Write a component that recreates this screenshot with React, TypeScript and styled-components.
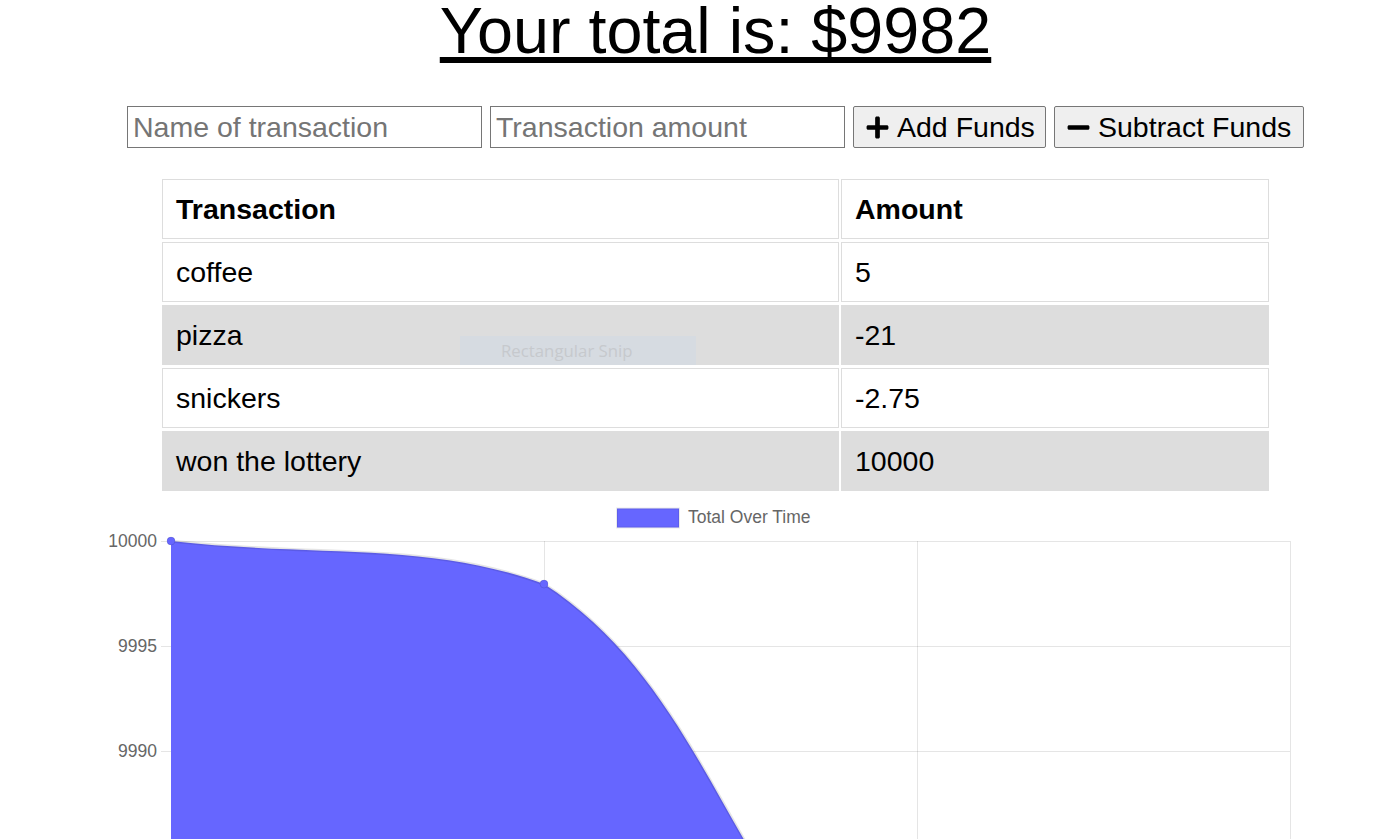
import React from "react";
import styled, { createGlobalStyle } from "styled-components";
import { FaPlus, FaMinus } from "react-icons/fa";

const GlobalStyle = createGlobalStyle`
  html, body { margin: 0; padding: 0; background: #fff; overflow: hidden; }
  body { font-family: "Liberation Sans", Arial, sans-serif; color: #000; }
`;

const Page = styled.div`
  position: relative;
  width: 1391px;
  height: 839px;
  padding-left: 40px;
  box-sizing: border-box;
  overflow: hidden;
`;

const Title = styled.h1`
  margin: 0;
  font-size: 64.7px;
  line-height: 62px;
  font-weight: normal;
  text-align: center;
  text-decoration: underline;
`;

const Form = styled.div`
  display: flex;
  justify-content: center;
  gap: 8px;
  margin-top: 44px;
`;

const Field = styled.input`
  box-sizing: border-box;
  width: 355px;
  height: 42px;
  padding: 0 5px;
  border: 1px solid #767676;
  border-radius: 0;
  font-family: "Liberation Sans", Arial, sans-serif;
  font-size: 28.5px;
  color: #000;
  &::placeholder { color: #757575; }
`;

const Button = styled.button<{ $w: number }>`
  box-sizing: border-box;
  display: flex;
  align-items: center;
  gap: 7px;
  width: ${(p) => p.$w}px;
  height: 42px;
  padding: 0 11px;
  background: #efefef;
  border: 1px solid #767676;
  border-radius: 2px;
  font-family: "Liberation Sans", Arial, sans-serif;
  font-size: 28.5px;
  color: #000;
  white-space: nowrap;
  svg { flex: none; }
`;

const Table = styled.table`
  width: 1111px;
  margin: 28px auto 0;
  border-collapse: separate;
  border-spacing: 2px 3px;
  font-size: 28.5px;
`;

const Row = styled.tr<{ $striped?: boolean }>`
  background: ${(p) => (p.$striped ? "#dddddd" : "transparent")};
`;

const Cell = styled.td<{ $first?: boolean }>`
  box-sizing: border-box;
  height: 60px;
  width: ${(p) => (p.$first ? "677px" : "auto")};
  padding: 0 13px;
  border: 1px solid #dddddd;
  text-align: left;
  vertical-align: middle;
`;

const HeadCell = styled(Cell).attrs({ as: "th" })`
  font-weight: bold;
`;

const ChartBox = styled.div`
  margin-left: -40px;
  svg { display: block; }
`;

const Snip = styled.div`
  position: absolute;
  left: 460px;
  top: 336px;
  width: 236px;
  height: 29px;
  box-sizing: border-box;
  padding-left: 41px;
  display: flex;
  align-items: center;
  background: rgba(208, 216, 228, 0.55);
  color: #c6c9cd;
  font-family: "Open Sans", "Noto Sans", sans-serif;
  font-size: 16.8px;
`;

const rows = [
  { name: "coffee", amount: "5" },
  { name: "pizza", amount: "-21" },
  { name: "snickers", amount: "-2.75" },
  { name: "won the lottery", amount: "10000" },
];

const curve =
  "M171,541 C320.2,557.8 426.4,541 544,584 C724.8,700.1 738.4,943.6 917,1024";

function Chart() {
  const gridY = [541, 646, 751];
  const gridX = [544, 917, 1290];
  const grid = "rgba(0,0,0,0.1)";
  return (
    <ChartBox>
      <svg width={1391} height={345} viewBox="0 494 1391 345">
        <rect x={617} y={508.5} width={62} height={19} fill="#6666ff" stroke="rgba(0,0,0,0.08)" strokeWidth={2} />
        <text x={688} y={523} fontSize={17.5} fill="#666" fontFamily="Liberation Sans, Arial, sans-serif">
          Total Over Time
        </text>
        {gridY.map((y) => (
          <line key={y} x1={161} x2={1290} y1={y + 0.5} y2={y + 0.5} stroke={grid} />
        ))}
        <line x1={171.5} x2={171.5} y1={541} y2={900} stroke={grid} />
        {gridX.map((x) => (
          <line key={x} x1={x + 0.5} x2={x + 0.5} y1={541} y2={900} stroke={grid} />
        ))}
        {[
          ["10000", 541],
          ["9995", 646],
          ["9990", 751],
        ].map(([t, y]) => (
          <text
            key={t}
            x={157}
            y={(y as number) + 6}
            textAnchor="end"
            fontSize={17.5}
            fill="#666"
            fontFamily="Liberation Sans, Arial, sans-serif"
          >
            {t}
          </text>
        ))}
        <path d={`${curve} L917,1100 L171,1100 Z`} fill="#6666ff" />
        <path d={curve} fill="none" stroke="rgba(0,0,0,0.1)" strokeWidth={3} />
        <circle cx={171} cy={541} r={4} fill="#6666ff" stroke="rgba(0,0,0,0.1)" />
        <circle cx={544} cy={584} r={4} fill="#6666ff" stroke="rgba(0,0,0,0.1)" />
      </svg>
    </ChartBox>
  );
}

export default function App() {
  return (
    <Page>
      <GlobalStyle />
      <Title>Your total is: $9982</Title>
      <Form>
        <Field placeholder="Name of transaction" />
        <Field placeholder="Transaction amount" />
        <Button $w={193}>
          <FaPlus size={25} />
          Add Funds
        </Button>
        <Button $w={250}>
          <FaMinus size={25} />
          Subtract Funds
        </Button>
      </Form>
      <Table>
        <thead>
          <Row>
            <HeadCell $first>Transaction</HeadCell>
            <HeadCell>Amount</HeadCell>
          </Row>
        </thead>
        <tbody>
          {rows.map((r, i) => (
            <Row key={r.name} $striped={i % 2 === 1}>
              <Cell $first>{r.name}</Cell>
              <Cell>{r.amount}</Cell>
            </Row>
          ))}
        </tbody>
      </Table>
      <Chart />
      <Snip>Rectangular Snip</Snip>
    </Page>
  );
}
